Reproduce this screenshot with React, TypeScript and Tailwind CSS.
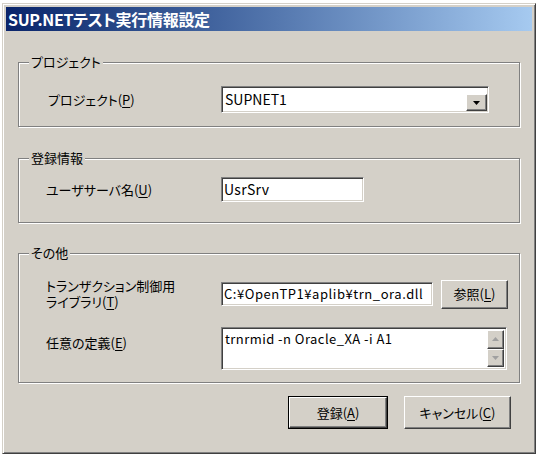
import React from "react";

const F = "font-['Noto_Sans_CJK_JP','Noto_Sans',sans-serif] [font-feature-settings:'palt']";

const sunken =
  "border border-[#808080] border-b-white border-r-white shadow-[inset_1px_1px_0_#404040,inset_-1px_-1px_0_#d4d0c8]";
const raised =
  "border border-white border-b-[#404040] border-r-[#404040] shadow-[inset_-1px_-1px_0_#808080]";

function U({ c }: { c: string }) {
  return <span className="underline underline-offset-2">{c}</span>;
}

function Group({
  title,
  className,
  children,
}: {
  title: string;
  className: string;
  children: React.ReactNode;
}) {
  return (
    <div
      className={`flex flex-col border border-[#808080] shadow-[inset_1px_1px_0_#fff,1px_1px_0_#fff] ${className}`}
    >
      <div className="flex h-[20px] mt-[-11px] mb-[-9px]">
        <div className="w-[10px] shrink-0" />
        <span className="bg-[#d4d0c8] px-[2px] text-[13px] leading-[20px] text-black">
          {title}
        </span>
      </div>
      {children}
    </div>
  );
}

function Arrow({ up, color }: { up?: boolean; color: string }) {
  return (
    <svg width="7" height="4" viewBox="0 0 7 4">
      {up ? (
        <polygon points="3.5,0 7,4 0,4" fill={color} />
      ) : (
        <polygon points="0,0 7,0 3.5,4" fill={color} />
      )}
    </svg>
  );
}

export default function App() {
  return (
    <div className={`w-[537px] h-[456px] bg-white pt-[3px] pl-[2px] ${F}`}>
      <div
        className={`w-[534px] h-[451px] bg-[#d4d0c8] border border-[#d4d0c8] border-b-[#404040] border-r-[#404040] shadow-[inset_1px_1px_0_#fff,inset_-1px_-1px_0_#808080] p-[3px] flex flex-col`}
      >
        <div className="h-[24px] bg-gradient-to-r from-[#0a246a] to-[#a6caf0] flex items-center pl-[2px]">
          <span className="text-white font-bold text-[16px] leading-none tracking-[-0.3px]">
            SUP.NETテスト実行情報設定
          </span>
        </div>

        <div className="flex flex-col px-[12px] pt-[31px] text-[13px] text-black">
          <Group title="プロジェクト" className="h-[65px]">
            <div className="flex items-center pt-[23px]">
              <span className="w-[202px] pl-[29px]">
                プロジェクト(<U c="P" />)
              </span>
              <div className={`w-[268px] h-[27px] bg-white ${sunken} flex items-center pl-[3px] relative`}>
                <span className="text-[14px]">SUPNET1</span>
                <div className={`absolute right-[1px] bottom-[1px] w-[21px] h-[17px] bg-[#d4d0c8] ${raised} flex items-center justify-center`}>
                  <Arrow color="#000" />
                </div>
              </div>
            </div>
          </Group>

          <Group title="登録情報" className="h-[65px] mt-[31px]">
            <div className="flex items-center pt-[18px]">
              <span className="w-[202px] pl-[27px]">
                ユーザサーバ名(<U c="U" />)
              </span>
              <div className={`w-[143px] h-[25px] bg-white ${sunken} flex items-center pl-[2px]`}>
                <span className="text-[14px] tracking-[0.3px]">UsrSrv</span>
              </div>
            </div>
          </Group>

          <Group title="その他" className="h-[130px] mt-[30px]">
            <div className="flex items-center pt-[24px]">
              <span className="w-[202px] pl-[27px] leading-[16px]">
                トランザクション制御用
                <br />
                ライブラリ(<U c="T" />)
              </span>
              <div className={`w-[212px] h-[24px] bg-white ${sunken} flex items-center pl-[2px] overflow-hidden`}>
                <span className="text-[13px] tracking-[0.55px] whitespace-nowrap">C:¥OpenTP1¥aplib¥trn_ora.dll</span>
              </div>
              <div className={`ml-[8px] w-[67px] h-[29px] bg-[#d4d0c8] ${raised} flex items-center justify-center`}>
                参照(<U c="L" />)
              </div>
            </div>
            <div className="flex items-start pt-[17px]">
              <span className="w-[202px] pl-[27px] pt-[6px]">
                任意の定義(<U c="E" />)
              </span>
              <div className={`w-[286px] h-[43px] bg-white ${sunken} flex p-[2px]`}>
                <span className="flex-1 text-[13px] pl-[1px] leading-[18px] tracking-[0.45px] whitespace-nowrap">trnrmid -n Oracle_XA -i A1</span>
                <div className="w-[17px] flex flex-col bg-[#e8e6e2]">
                  <div className={`h-[19px] bg-[#d4d0c8] ${raised} flex items-center justify-center`}>
                    <Arrow up color="#a0a0a0" />
                  </div>
                  <div className="flex-1" />
                  <div className={`h-[19px] bg-[#d4d0c8] ${raised} flex items-center justify-center`}>
                    <Arrow color="#a0a0a0" />
                  </div>
                </div>
              </div>
            </div>
          </Group>

          <div className="flex justify-end gap-[16px] mt-[13px] pr-[9px]">
            <div className="w-[100px] h-[33px] border border-black">
              <div className={`w-full h-full bg-[#d4d0c8] ${raised} flex items-center justify-center`}>
                登録(<U c="A" />)
              </div>
            </div>
            <div className={`w-[107px] h-[33px] bg-[#d4d0c8] ${raised} flex items-center justify-center`}>
              キャンセル(<U c="C" />)
            </div>
          </div>
        </div>
      </div>
    </div>
  );
}
